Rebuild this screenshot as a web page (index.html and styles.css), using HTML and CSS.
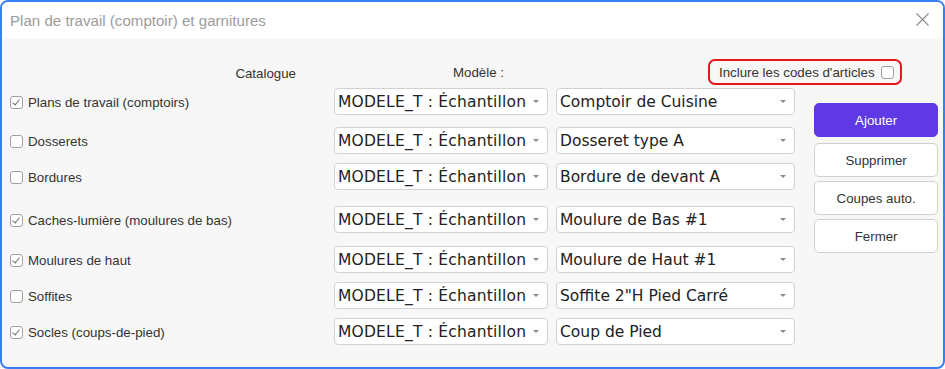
FILE: index.html
```html
<!DOCTYPE html>
<html lang="fr">
<head>
<meta charset="utf-8">
<title>Plan de travail (comptoir) et garnitures</title>
<link rel="stylesheet" href="styles.css">
</head>
<body>
<div class="dialog">
  <div class="titlebar">
    <span class="title">Plan de travail (comptoir) et garnitures</span>
    <span class="close">
      <svg width="13" height="13" viewBox="0 0 13 13"><path d="M0.5 0.5L12.5 12.5M12.5 0.5L0.5 12.5" stroke="#8a8a8a" stroke-width="1.1" fill="none"/></svg>
    </span>
  </div>
  <div class="content">
    <div class="header">
      <span class="h-cat">Catalogue</span>
      <span class="h-mod">Modèle :</span>
      <label class="incl">Inclure les codes d'articles <span class="cb"></span></label>
    </div>
    <div class="columns">
      <div class="rows">
        <div class="row r1">
          <label class="lab"><span class="cb on"></span>Plans de travail (comptoirs)</label>
          <div class="sel s1">MODELE_T : Échantillon<i class="arr"></i></div>
          <div class="sel s2">Comptoir de Cuisine<i class="arr"></i></div>
        </div>
        <div class="row r2">
          <label class="lab"><span class="cb"></span>Dosserets</label>
          <div class="sel s1">MODELE_T : Échantillon<i class="arr"></i></div>
          <div class="sel s2">Dosseret type A<i class="arr"></i></div>
        </div>
        <div class="row r3">
          <label class="lab"><span class="cb"></span>Bordures</label>
          <div class="sel s1">MODELE_T : Échantillon<i class="arr"></i></div>
          <div class="sel s2">Bordure de devant A<i class="arr"></i></div>
        </div>
        <div class="row r4">
          <label class="lab"><span class="cb on"></span>Caches-lumière (moulures de bas)</label>
          <div class="sel s1">MODELE_T : Échantillon<i class="arr"></i></div>
          <div class="sel s2">Moulure de Bas #1<i class="arr"></i></div>
        </div>
        <div class="row r5">
          <label class="lab"><span class="cb on"></span>Moulures de haut</label>
          <div class="sel s1">MODELE_T : Échantillon<i class="arr"></i></div>
          <div class="sel s2">Moulure de Haut #1<i class="arr"></i></div>
        </div>
        <div class="row r6">
          <label class="lab"><span class="cb"></span>Soffites</label>
          <div class="sel s1">MODELE_T : Échantillon<i class="arr"></i></div>
          <div class="sel s2">Soffite 2"H Pied Carré<i class="arr"></i></div>
        </div>
        <div class="row r7">
          <label class="lab"><span class="cb on"></span>Socles (coups-de-pied)</label>
          <div class="sel s1">MODELE_T : Échantillon<i class="arr"></i></div>
          <div class="sel s2">Coup de Pied<i class="arr"></i></div>
        </div>
      </div>
      <div class="side">
        <button class="btn primary">Ajouter</button>
        <button class="btn b2">Supprimer</button>
        <button class="btn">Coupes auto.</button>
        <button class="btn">Fermer</button>
      </div>
    </div>
  </div>
</div>
</body>
</html>
```
FILE: styles.css
```css
* { box-sizing: border-box; }
html, body { margin: 0; padding: 0; background: #ffffff; }
body { font-family: "Liberation Sans", Arial, sans-serif; }

.dialog {
  width: 945px;
  height: 369px;
  border: 2px solid #3a7ef3;
  border-radius: 8px;
  background: #f7f7f7;
  overflow: hidden;
}

.titlebar {
  height: 36px;
  background: #ffffff;
  display: flex;
  align-items: center;
  justify-content: space-between;
  padding: 0 14px 0 8px;
}
.title {
  font-size: 15.1px;
  color: #9c9c9c;
}
.close { display: flex; margin-top: -2px; }

.content {
  padding: 21px 5px 0 8px;
}

.header {
  display: flex;
  align-items: center;
  height: 26px;
  font-size: 13.3px;
  color: #333333;
}
.h-cat {
  width: 286px;
  text-align: right;
  margin-top: 2px;
}
.h-mod {
  width: 208px;
  text-align: right;
}
.incl {
  margin-left: auto;
  margin-right: 36px;
  height: 26px;
  width: 194px;
  border: 2px solid #e8141c;
  border-radius: 7px;
  display: flex;
  align-items: center;
  justify-content: space-between;
  padding: 0 6px 0 9px;
  color: #333333;
  font-size: 13.3px;
}

.cb {
  width: 13px;
  height: 13px;
  border: 1px solid #a0a0a0;
  border-radius: 3px;
  background: #ffffff;
  display: inline-block;
  position: relative;
  flex: none;
}
.cb.on::after {
  content: "";
  position: absolute;
  left: 3px;
  top: 1px;
  width: 3px;
  height: 6px;
  border-right: 1.5px solid #6f6f6f;
  border-bottom: 1.5px solid #6f6f6f;
  transform: rotate(40deg);
}

.columns {
  display: flex;
  align-items: flex-start;
}
.rows {
  width: 787px;
  margin-top: 3px;
}
.row {
  display: flex;
  align-items: center;
  height: 27px;
}
.r2 { margin-top: 12px; }
.r3 { margin-top: 9px; }
.r4 { margin-top: 16px; }
.r5 { margin-top: 13px; }
.r6 { margin-top: 9px; }
.r7 { margin-top: 9px; }

.lab {
  width: 324px;
  display: flex;
  align-items: center;
  gap: 5px;
  font-size: 13.3px;
  color: #333333;
  margin-top: 1px;
}

.sel {
  position: relative;
  height: 27px;
  background: #ffffff;
  border: 1px solid #d2d2d2;
  border-radius: 4px;
  font-family: "DejaVu Sans", sans-serif;
  font-size: 15.5px;
  color: #222222;
  white-space: nowrap;
  overflow: hidden;
  display: flex;
  align-items: center;
  padding-left: 3px;
}
.s1 { width: 214px; letter-spacing: 0.2px; }
.s2 { width: 239px; margin-left: 8px; }
.arr {
  position: absolute;
  right: 8px;
  top: 11px;
  width: 0;
  height: 0;
  border-left: 3px solid transparent;
  border-right: 3px solid transparent;
  border-top: 3px solid #8a8a8a;
}

.side {
  width: 124px;
  margin-left: 19px;
  margin-top: 18px;
  display: flex;
  flex-direction: column;
  gap: 4px;
}
.btn {
  height: 34px;
  border: 1px solid #d0d0d0;
  border-radius: 5px;
  background: #ffffff;
  font-family: "Liberation Sans", Arial, sans-serif;
  font-size: 13.3px;
  color: #333333;
  padding: 0;
}
.btn.primary {
  background: #6039e6;
  border-color: #6039e6;
  color: #ffffff;
  margin-bottom: 2px;
}
```
